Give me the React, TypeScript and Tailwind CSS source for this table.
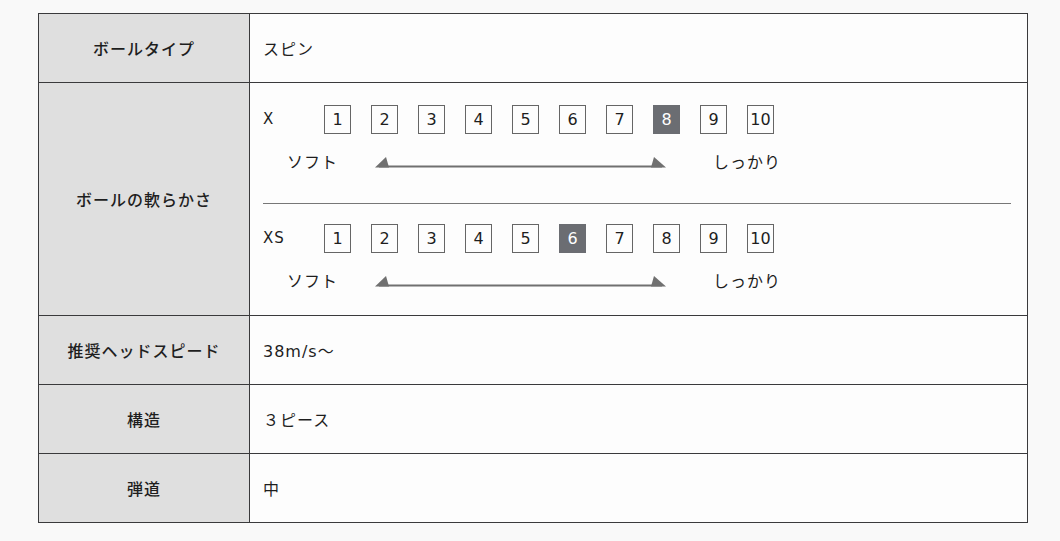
const font = {
  fontFamily: '"DejaVu Sans", "Noto Sans CJK JP", sans-serif',
};

const rows = [
  { label: "ボールタイプ", value: "スピン" },
  { label: "ボールの軟らかさ", value: null },
  { label: "推奨ヘッドスピード", value: "38m/s〜" },
  { label: "構造", value: "３ピース" },
  { label: "弾道", value: "中" },
];

function Arrow() {
  return (
    <svg width="291" height="12" viewBox="0 0 291 12" className="block">
      <line x1="4" y1="9.5" x2="287" y2="9.5" stroke="#707070" strokeWidth="2" />
      <polygon points="0,10.5 11,0 14,10.5" fill="#707070" />
      <polygon points="291,10.5 279,0 276,10.5" fill="#707070" />
    </svg>
  );
}

function Scale({ name, active }: { name: string; active: number }) {
  return (
    <div>
      <div className="flex items-center h-[29px]">
        <span className="w-[61px] text-[15px] tracking-[1px]">{name}</span>
        <div className="flex gap-[20px]">
          {[1, 2, 3, 4, 5, 6, 7, 8, 9, 10].map((n) => (
            <div
              key={n}
              className={
                n === active
                  ? "w-[27px] h-[29px] flex items-center justify-center bg-[#6b6d72] text-white text-[16px]"
                  : "w-[27px] h-[29px] flex items-center justify-center border border-[#666] text-[16px]"
              }
            >
              {n}
            </div>
          ))}
        </div>
      </div>
      <div className="flex items-center h-[29px] mt-[14px] pl-[24px] text-[16px] tracking-[1px]">
        <span className="w-[88px]">ソフト</span>
        <Arrow />
        <span className="ml-[47px]">しっかり</span>
      </div>
    </div>
  );
}

export default function App() {
  return (
    <div className="min-h-[541px] bg-[#f9f9f9] pt-[13px] text-[#1e1e1e]" style={font}>
      <table className="ml-[38px] w-[990px] border-collapse bg-[#fdfdfd]">
        <tbody>
          {rows.map((row, i) => (
            <tr key={i}>
              <th className="w-[211px] h-[69px] border border-[#3a3a3c] bg-[#dfdfdf] pt-[3px] text-center text-[16px] tracking-[1px] font-medium">
                {row.label}
              </th>
              {row.value !== null ? (
                <td className="h-[69px] border border-[#3a3a3c] pl-[13px] pt-[3px] text-[16px] tracking-[1px]">
                  {row.value}
                </td>
              ) : (
                <td className="border border-[#3a3a3c] pl-[13px] pr-[16px] pt-[22px] pb-[19px]">
                  <Scale name="X" active={8} />
                  <div className="mt-[26px] mb-[20px] h-px bg-[#777]" />
                  <Scale name="XS" active={6} />
                </td>
              )}
            </tr>
          ))}
        </tbody>
      </table>
    </div>
  );
}
